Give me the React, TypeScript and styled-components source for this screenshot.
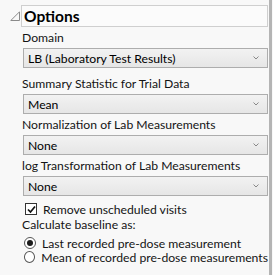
import React from "react";
import styled, { createGlobalStyle } from "styled-components";

const Global = createGlobalStyle`
  html, body { margin: 0; padding: 0; background: #f8f8f8; }
  body { font-family: Lato, "Noto Sans", sans-serif; font-size: 12.2px; color: #141414; }
`;

const Page = styled.div`
  display: flex;
  width: 273px;
  height: 275px;
  overflow: hidden;
`;

const Panel = styled.div`
  flex: 1;
  min-width: 0;
  padding: 5px 0 0 10px;
  display: flex;
  flex-direction: column;
`;

const ScrollEdge = styled.div`
  width: 3px;
  margin: 0 1px 0 1px;
  background: #b4b4b4;
`;

const Header = styled.div`
  display: flex;
  align-items: center;
  gap: 1px;
`;

const Title = styled.div`
  flex: 1;
  height: 20px;
  border: 1px solid #cfcfcf;
  background: #fbfbfb;
  font-weight: 700;
  font-size: 15.5px;
  line-height: 20px;
  padding-left: 2px;
  color: #000;
`;

const Body = styled.div`
  padding-left: 12px;
  display: flex;
  flex-direction: column;
`;

const Label = styled.div<{ $top?: number }>`
  margin-top: ${(p) => p.$top ?? 0}px;
  height: 16px;
  line-height: 16px;
  white-space: nowrap;
`;

const Combo = styled.div`
  margin: 2px 0 3px 1px;
  height: 18px;
  border: 1px solid #adadad;
  background: linear-gradient(#f2f2f2, #e6e6e6);
  display: flex;
  align-items: center;
  padding: 0 8px 0 4px;
`;

const ComboText = styled.span`
  flex: 1;
  color: #000;
  white-space: nowrap;
`;

const Row = styled.div<{ $top?: number; $pad?: number }>`
  display: flex;
  align-items: center;
  gap: 6px;
  height: 14px;
  margin-top: ${(p) => p.$top ?? 0}px;
  padding-left: ${(p) => p.$pad ?? 2}px;
  white-space: nowrap;
`;

const CheckBox = styled.div`
  width: 10px;
  height: 10px;
  border: 1px solid #333;
  background: #fff;
  display: flex;
  align-items: center;
  justify-content: center;
`;

const Radio = styled.div<{ $on?: boolean }>`
  width: 10px;
  height: 10px;
  border: 1px solid #555;
  border-radius: 50%;
  background: #fff;
  display: flex;
  align-items: center;
  justify-content: center;
  &::after {
    content: "";
    width: 6px;
    height: 6px;
    border-radius: 50%;
    background: ${(p) => (p.$on ? "#1a1a1a" : "transparent")};
  }
`;

const Chevron = () => (
  <svg width="6" height="4" viewBox="0 0 6 4">
    <path d="M0.5 0.5 L3 3 L5.5 0.5" fill="none" stroke="#888" strokeWidth="1" />
  </svg>
);

const Select = ({ value }: { value: string }) => (
  <Combo>
    <ComboText>{value}</ComboText>
    <Chevron />
  </Combo>
);

export default function App() {
  return (
    <>
      <Global />
      <Page>
        <Panel>
          <Header>
            <svg width="10" height="10" viewBox="0 0 10 10">
              <path d="M0.8 9.5 L9.5 9.5 L9.5 0.8 Z" fill="none" stroke="#8a8a8a" strokeWidth="1" />
            </svg>
            <Title>Options</Title>
          </Header>
          <Body>
            <Label $top={3}>Domain</Label>
            <Select value="LB (Laboratory Test Results)" />
            <Label $top={5}>Summary Statistic for Trial Data</Label>
            <Select value="Mean" />
            <Label>Normalization of Lab Measurements</Label>
            <Select value="None" />
            <Label>log Transformation of Lab Measurements</Label>
            <Select value="None" />
            <Row $top={3} $pad={3}>
              <CheckBox>
                <svg width="9" height="9" viewBox="0 0 9 9">
                  <path d="M1 4.5 L3.5 7 L8 1.5" fill="none" stroke="#111" strokeWidth="1.7" />
                </svg>
              </CheckBox>
              Remove unscheduled visits
            </Row>
            <Label $top={1}>Calculate baseline as:</Label>
            <Row $top={3}>
              <Radio $on />
              Last recorded pre-dose measurement
            </Row>
            <Row>
              <Radio />
              Mean of recorded pre-dose measurements
            </Row>
          </Body>
        </Panel>
        <ScrollEdge />
      </Page>
    </>
  );
}
